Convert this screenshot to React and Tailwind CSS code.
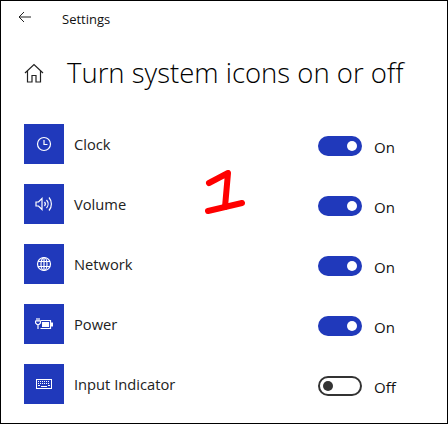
const blue = 'bg-[#2039bb]'

const ClockIcon = () => (
  <svg width="16" height="16" viewBox="0 0 16 16" fill="none" stroke="#fff" strokeWidth="1.2">
    <circle cx="8" cy="8" r="6.5" />
    <path d="M8 4v4.5h3.5" />
  </svg>
)

const VolumeIcon = () => (
  <svg width="18" height="16" viewBox="0 0 18 16" fill="none" stroke="#fff" strokeWidth="1.2">
    <path d="M1 6h2.500L7 2.500v11L3.500 10H1z" />
    <path d="M9.500 6a3 3 0 0 1 0 4" />
    <path d="M11.500 4a6 6 0 0 1 0 8" />
    <path d="M14 1.500a10 10 0 0 1 0 13" />
  </svg>
)

const GlobeIcon = () => (
  <svg width="16" height="16" viewBox="0 0 16 16" fill="none" stroke="#fff" strokeWidth="1.2">
    <circle cx="8" cy="8" r="6.5" />
    <ellipse cx="8" cy="8" rx="3" ry="6.5" />
    <path d="M2 5.500h12M2 10.500h12M8 1.500v13" />
  </svg>
)

const PowerIcon = () => (
  <svg width="18" height="12" viewBox="0 0 18 12" fill="none" stroke="#fff" strokeWidth="1.2">
    <path d="M5.500 2.500h10v8h-10" />
    <path d="M16 5h1.500v3H16" fill="#fff" />
    <rect x="7" y="4" width="7" height="5" fill="#fff" stroke="none" />
    <path d="M2 0v3M4 0v3M.5 3h5v2l-1.500 1.500h-2L.5 5zM3 6.500V11" />
  </svg>
)

const KeyboardIcon = () => (
  <svg width="16" height="10" viewBox="0 0 16 10" fill="none">
    <rect x="0.5" y="0.5" width="15" height="9" stroke="#fff" />
    <path d="M2 2.500h12M2 4.500h12" stroke="#fff" strokeDasharray="1 1" />
    <path d="M2 6.500h2M5 7.500h6M12 6.500h2" stroke="#fff" />
  </svg>
)

const rows = [
  { label: 'Clock', icon: <ClockIcon />, on: true },
  { label: 'Volume', icon: <VolumeIcon />, on: true },
  { label: 'Network', icon: <GlobeIcon />, on: true },
  { label: 'Power', icon: <PowerIcon />, on: true },
  { label: 'Input Indicator', icon: <KeyboardIcon />, on: false },
]

const Toggle = ({ on }) => (
  <div className="flex items-center mt-1 w-[100px]">
    {on ? (
      <div className={`w-11 h-5 rounded-full ${blue} flex items-center justify-end pr-[5px]`}>
        <div className="w-[10px] h-[10px] rounded-full bg-white" />
      </div>
    ) : (
      <div className="w-11 h-5 rounded-full border-2 border-[#333] flex items-center pl-[3px]">
        <div className="w-[10px] h-[10px] rounded-full bg-[#333]" />
      </div>
    )}
    <span className="ml-3 mt-[2px] text-[15px] leading-5 text-[#111]">{on ? 'On' : 'Off'}</span>
  </div>
)

export default function App() {
  return (
    <div className="relative w-[448px] h-[424px] bg-white border border-black font-['Open_Sans',sans-serif] overflow-hidden">
      <div className="flex items-center h-[36px] pl-[17px]">
        <svg width="14" height="12" viewBox="0 0 14 12" fill="none" stroke="#222" strokeWidth="1" className="-mt-1">
          <path d="M13 6H1M6 1 1 6l5 5" />
        </svg>
        <span className="ml-[30px] mt-[1px] text-[13px] text-[#111]">Settings</span>
      </div>

      <div className="flex items-center mt-[6px] pl-[23px] h-[60px]">
        <svg width="20" height="20" viewBox="0 0 20 20" fill="none" stroke="#222" strokeWidth="1.2">
          <path d="M1 10 10 1.500 19 10M3.500 8v11h4.500v-6.500h4V19h4.500V8" />
        </svg>
        <h1 className="ml-[23px] text-[27.500px] font-light text-black whitespace-nowrap">Turn system icons on or off</h1>
      </div>

      <div className="flex flex-col gap-5 mt-[21px] pl-[23px] pr-[29px]">
        {rows.map((row) => (
          <div key={row.label} className="flex items-center justify-between h-10">
            <div className="flex items-center">
              <div className={`w-10 h-10 ${blue} flex items-center justify-center`}>{row.icon}</div>
              <span className="ml-[10px] text-[14.700px] text-[#222]">{row.label}</span>
            </div>
            <Toggle on={row.on} />
          </div>
        ))}
      </div>

      <svg className="absolute left-[204px] top-[169px]" width="44" height="48" viewBox="0 0 44 48" fill="none" stroke="#ff0000" strokeWidth="6" strokeLinecap="round" strokeLinejoin="round">
        <path d="M4 13 23 3 20 37" />
        <path d="M3 41 37 33" />
      </svg>
    </div>
  )
}
